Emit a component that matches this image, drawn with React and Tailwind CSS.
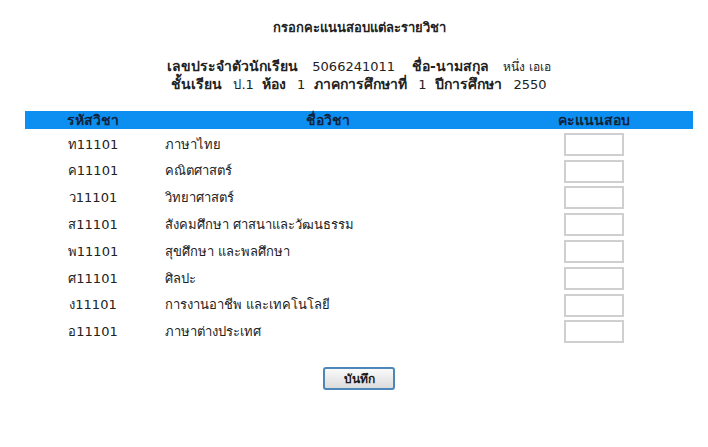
import React from 'react';

const subjects = [
  { code: 'ท11101', name: 'ภาษาไทย' },
  { code: 'ค11101', name: 'คณิตศาสตร์' },
  { code: 'ว11101', name: 'วิทยาศาสตร์' },
  { code: 'ส11101', name: 'สังคมศึกษา ศาสนาและวัฒนธรรม' },
  { code: 'พ11101', name: 'สุขศึกษา และพลศึกษา' },
  { code: 'ศ11101', name: 'ศิลปะ' },
  { code: 'ง11101', name: 'การงานอาชีพ และเทคโนโลยี' },
  { code: 'อ11101', name: 'ภาษาต่างประเทศ' },
];

export default function App() {
  return (
    <div className="w-[708px] h-[447px] bg-white text-[#222] font-['Tahoma','DejaVu_Sans','Noto_Sans',sans-serif] text-[13px]">
      <div className="mx-[25px] w-[668px]">
        <div className="pt-[18px] text-center font-bold text-[13px] leading-[20px]">กรอกคะแนนสอบแต่ละรายวิชา</div>

        <div className="mt-[20px] text-center leading-[17px]">
          <div>
            <span className="font-bold text-[14px]">เลขประจำตัวนักเรียน</span>
            <span className="ml-[14px]">5066241011</span>
            <span className="ml-[17px] font-bold text-[14px]">ชื่อ-นามสกุล</span>
            <span className="ml-[14px] text-[12px]">หนึ่ง เอเอ</span>
          </div>
          <div>
            <span className="font-bold text-[14px]">ชั้นเรียน</span>
            <span className="ml-[11px]">ป.1</span>
            <span className="ml-[8px] font-bold text-[14px]">ห้อง</span>
            <span className="ml-[11px]">1</span>
            <span className="ml-[9px] font-bold text-[14px]">ภาคการศึกษาที่</span>
            <span className="ml-[11px]">1</span>
            <span className="ml-[9px] font-bold text-[14px]">ปีการศึกษา</span>
            <span className="ml-[11px]">2550</span>
          </div>
        </div>

        <div className="mt-[18px]">
          <div className="flex h-[18px] items-center bg-[#0d8ff2] font-bold text-[14px] text-[#10243c]">
            <div className="w-[136px] text-center">รหัสวิชา</div>
            <div className="w-[334px] text-center">ชื่อวิชา</div>
            <div className="flex-1 text-center">คะแนนสอบ</div>
          </div>
          <div className="pt-[2px]">
            {subjects.map((s) => (
              <div key={s.code} className="flex h-[26.8px] items-center">
                <div className="w-[136px] text-center">{s.code}</div>
                <div className="w-[334px] pl-[4px]">{s.name}</div>
                <div className="flex-1 flex justify-center">
                  <input type="text" className="w-[60px] h-[23px] border-2 border-[#cfcfcf] bg-white outline-none" />
                </div>
              </div>
            ))}
          </div>
        </div>

        <div className="mt-[22px] flex justify-center">
          <button className="w-[72px] h-[23px] rounded-[3px] border-2 border-[#4d86b8] bg-gradient-to-b from-[#fafafa] to-[#dcdcdc] font-bold text-[12px] text-[#1a1a1a]">
            บันทึก
          </button>
        </div>
      </div>
    </div>
  );
}
